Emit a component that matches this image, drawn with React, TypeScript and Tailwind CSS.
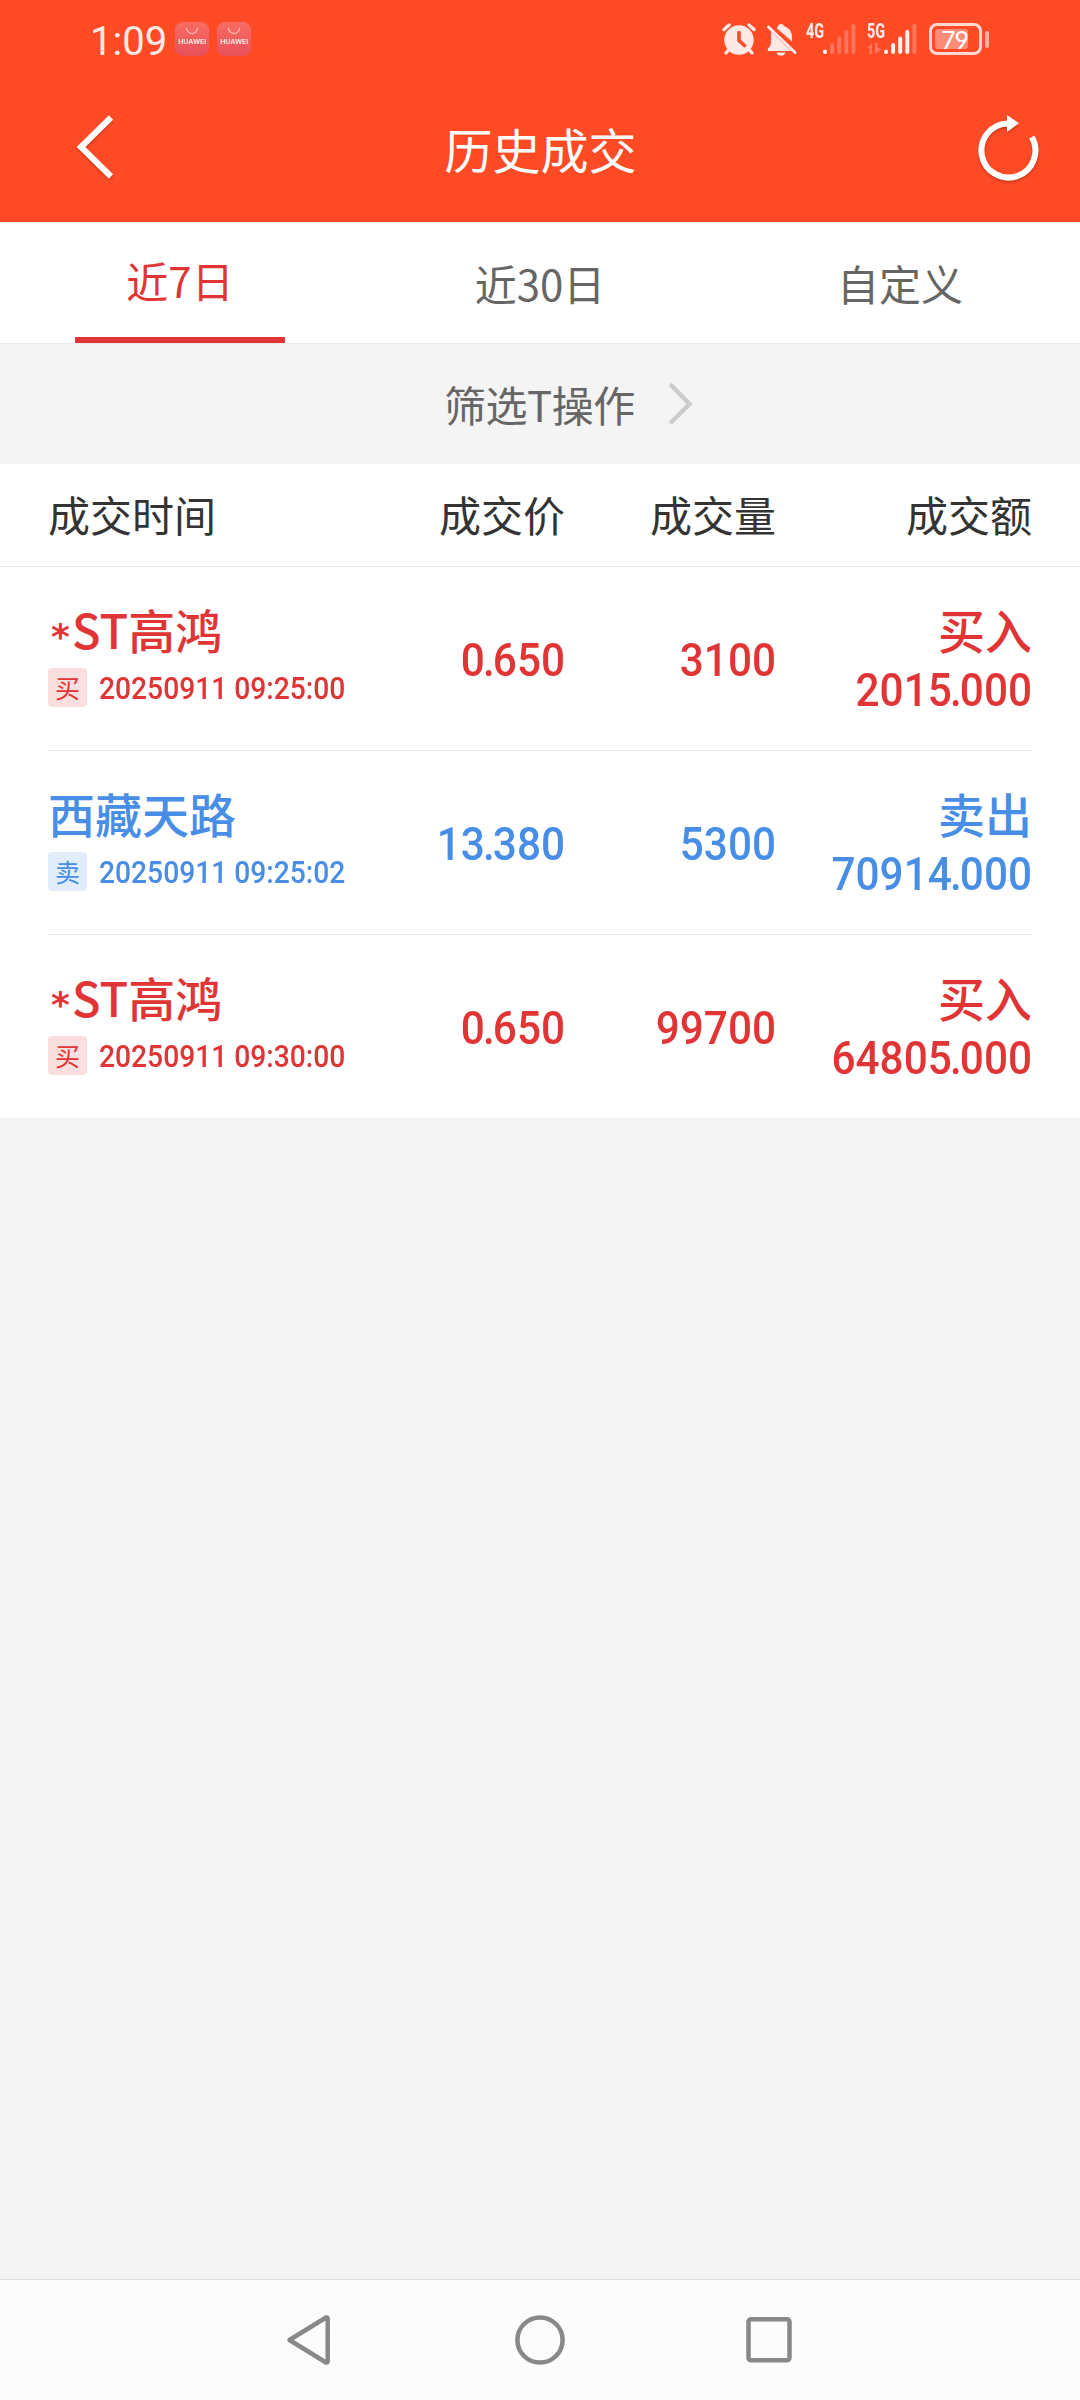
import React from "react";

type Trade = {
  name: string;
  starred?: boolean;
  side: "buy" | "sell";
  time: string;
  price: string;
  volume: string;
  amount: string;
};

const trades: Trade[] = [
  { name: "ST高鸿", starred: true, side: "buy", time: "20250911 09:25:00", price: "0.650", volume: "3100", amount: "2015.000" },
  { name: "西藏天路", side: "sell", time: "20250911 09:25:02", price: "13.380", volume: "5300", amount: "70914.000" },
  { name: "ST高鸿", starred: true, side: "buy", time: "20250911 09:30:00", price: "0.650", volume: "99700", amount: "64805.000" },
];

function HuaweiIcon() {
  return (
    <div className="flex h-[34px] w-[34px] flex-col items-center rounded-[8px] bg-gradient-to-b from-[#fa6c62] to-[#e8505a]">
      <svg className="mt-[5px] h-[8px] w-[14px]" viewBox="0 0 14 8" fill="none" stroke="#ffc4bd" strokeWidth="1.2">
        <path d="M1.5 1a5.5 5.5 0 0 0 11 0" />
      </svg>
      <span className="mt-[3px] scale-x-[1.15] font-['Inter'] text-[6px] leading-[7px] font-bold text-[#ffe9e6]">HUAWEI</span>
    </div>
  );
}

function AlarmIcon() {
  return (
    <svg className="h-[34px] w-[34px]" viewBox="0 0 34 34" fill="none">
      <circle cx="17" cy="18" r="14.7" fill="#ffe9e5" />
      <path d="M6.500 28 4 31M27.500 28 30 31" stroke="#ffe9e5" strokeWidth="3.400" strokeLinecap="round" />
      <path d="M2 7.500 7 3M32 7.500 27 3" stroke="#ffe9e5" strokeWidth="3.400" strokeLinecap="round" />
      <path d="M17 10.500V18.500L22.500 23.500" stroke="#ff4a26" strokeWidth="3.600" strokeLinecap="round" strokeLinejoin="round" />
    </svg>
  );
}

function MutedBellIcon() {
  return (
    <svg className="h-[34px] w-[32px]" viewBox="0 0 32 34" fill="none">
      <path d="M15 2c1.800 0 3 1 3.300 2.300C23.500 6 26 10 26 15v4.500L10.500 6c.8-.8 1.500-1.200 1.500-1.700C12.200 3 13.200 2 15 2Z" fill="#ffe9e5" />
      <path d="M5 9.500 25 29H2c-.8-2 .5-3 1.800-4.500C5 23 5 21 5 15.500Z" fill="#ffe9e5" />
      <path d="M10.500 30.500h9c-.6 2-2.200 3.300-4.500 3.300s-3.900-1.300-4.500-3.300Z" fill="#ffe9e5" />
      <path d="M2.500 5 29 30.500" stroke="#ffe9e5" strokeWidth="3" strokeLinecap="round" />
    </svg>
  );
}

function Signal({ label, level, data }: { label: string; level: number; data?: boolean }) {
  return (
    <div className="relative h-[32px] w-[50px]">
      <span className="absolute top-[1px] left-0 origin-left scale-x-[0.72] font-['Roboto'] text-[20px] leading-[14px] font-extrabold text-[#ffe9e5]">{label}</span>
      <svg className="h-[32px] w-[50px]" viewBox="0 0 50 32" strokeWidth="4" strokeLinecap="round" stroke="#fff1ee">
        {[28.500, 22, 15.500, 9, 4].map((y, i) => (
          <path key={y} d={`M${19 + i * 7.1} 29V${y - (i === 4 ? 1 : 0)}`} opacity={i < level ? 1 : 0.26} />
        ))}
        {data && (
          <path d="M0 25 5 20V31H2.500V25ZM8 20h2.500v5l4.500 1-7 5Z" fill="#fff" stroke="none" opacity="0.25" />
        )}
      </svg>
    </div>
  );
}

function Battery() {
  return (
    <div className="flex items-center">
      <div className="h-[32px] w-[53px] rounded-[8px] border-[3px] border-[#ffd9d2] p-[3px]">
        <div className="flex h-[20px] w-[33px] items-center justify-end rounded-[3px] bg-[#ff8c76] font-['Lato'] text-[25px] leading-none tracking-[-1px] text-white">79</div>
      </div>
      <div className="ml-[3px] h-[17px] w-[4px] rounded-[2px] bg-[#ffb5a6]" />
    </div>
  );
}

/** A right-aligned figure in condensed digits with a tightly set decimal point. */
function Figure({ value }: { value: string }) {
  const [whole, fraction] = value.split(".");
  return (
    <div className="origin-right scale-x-[0.92] text-right font-['Roboto'] text-[46px] leading-[54px] font-medium">
      {whole}
      {fraction && <span className="-mx-[2px]">.</span>}
      {fraction}
    </div>
  );
}

function TradeRow({ t, last }: { t: Trade; last: boolean }) {
  const buy = t.side === "buy";
  return (
    <div
      className={`mx-[48px] flex ${last ? "h-[183px]" : "h-[184px] border-b border-[#ebebeb]"} ${buy ? "text-[#e13434]" : "text-[#488ee6]"}`}
    >
      <div className="w-[317px] pt-[35px]">
        <div className="flex h-[54px] items-baseline text-[47px] leading-[54px] font-medium whitespace-nowrap">
          {t.starred && <span className="mr-[2px] ml-[3px] w-[19px] font-['DejaVu_Sans'] text-[36px] font-bold">*</span>}
          {t.name}
        </div>
        <div className="mt-[11px] flex items-center">
          <span
            className={`flex h-[39px] w-[39px] shrink-0 items-center justify-center rounded-[4px] text-[25px] leading-[37px] ${buy ? "bg-[#fbdfdf]" : "bg-[#e1edfb]"}`}
          >
            {buy ? "买" : "卖"}
          </span>
          <span className="ml-[12px] origin-left scale-x-[0.91] pt-[4px] font-['Roboto'] text-[31px] leading-[36px] font-medium whitespace-nowrap">
            {t.time}
          </span>
        </div>
      </div>
      <div className="w-[200px] pt-[66px]"><Figure value={t.price} /></div>
      <div className="w-[211px] pt-[66px]"><Figure value={t.volume} /></div>
      <div className="flex-1 pt-[35px]">
        <div className="text-right text-[47px] leading-[54px] font-medium">{buy ? "买入" : "卖出"}</div>
        <div className="mt-[7px]"><Figure value={t.amount} /></div>
      </div>
    </div>
  );
}

export default function App() {
  return (
    <div className="flex h-[2400px] w-[1080px] flex-col overflow-hidden bg-[#f4f4f4] font-['Noto_Sans_CJK_SC',sans-serif]">
      <header className="h-[222px] bg-[#ff4a26]">
        <div className="flex h-[78px] items-center pl-[90px]">
          <span className="w-[85px] pt-[5px] font-['Roboto'] text-[40px] leading-[40px] text-[#ffe9e5]">1:09</span>
          <div className="flex gap-[8px]">
            <HuaweiIcon />
            <HuaweiIcon />
          </div>
          <div className="ml-[471px] flex items-center">
            <AlarmIcon />
            <div className="ml-[10px]"><MutedBellIcon /></div>
            <div className="ml-[8px]"><Signal label="4G" level={1} /></div>
            <div className="ml-[11px]"><Signal label="5G" level={4} data /></div>
            <div className="ml-[12px]"><Battery /></div>
          </div>
        </div>
        <div className="flex h-[144px] items-start justify-between pt-[32px] pr-[39px] pl-[72px]">
          <svg className="h-[74px] w-[48px] drop-shadow-[0_2px_1px_rgba(0,0,0,0.2)]" viewBox="72 110 48 74" fill="none" stroke="#fff" strokeWidth="6">
            <path d="M111 117.500 81 147 111 176.500" />
          </svg>
          <h1 className="-ml-[14px] pt-[2px] text-[48px] leading-[72px] text-white">历史成交</h1>
          <svg className="h-[74px] w-[66px] drop-shadow-[0_2px_1px_rgba(0,0,0,0.2)]" viewBox="976 110 66 74" fill="none">
            <path d="M1009 123.500A27 27 0 1 0 1032.800 137" stroke="#fff" strokeWidth="6" />
            <path d="M1008 115 1020 123.300 1008 132Z" fill="#fff" />
          </svg>
        </div>
      </header>

      <nav className="flex h-[122px] border-b border-[#ebebeb] bg-white text-[42px] leading-[60px] text-[#666]">
        <div className="flex w-[360px] justify-center">
          <div className="h-[121px] w-[210px] border-b-[6px] border-[#e13434] pt-[28px] text-center text-[#e13434]">近7日</div>
        </div>
        <div className="w-[360px] pt-[31px] text-center">近30日</div>
        <div className="w-[360px] pt-[31px] text-center">自定义</div>
      </nav>

      <div className="flex h-[120px] items-center pl-[444px] text-[42px] leading-[60px] text-[#666]">
        <span className="tracking-[-0.500px]">筛选T操作</span>
        <svg className="ml-[33px] h-[44px] w-[26px]" viewBox="668 382 26 44" fill="none" stroke="#ccc" strokeWidth="4.500" strokeLinecap="round">
          <path d="M671.500 385.500 689.500 404 671.500 422" />
        </svg>
      </div>

      <main className="bg-white">
        <div className="flex h-[103px] border-b border-[#ebebeb] px-[48px] pt-[20px] text-[42px] leading-[60px] text-[#333]">
          <div className="w-[317px]">成交时间</div>
          <div className="w-[200px] text-right">成交价</div>
          <div className="w-[211px] text-right">成交量</div>
          <div className="flex-1 text-right">成交额</div>
        </div>
        {trades.map((t, i) => (
          <TradeRow key={t.time} t={t} last={i === trades.length - 1} />
        ))}
      </main>

      <footer className="mt-auto flex h-[121px] items-center border-t border-[#dcdcdc] bg-[#fcfcfc] pl-[284px]">
        <svg className="h-[54px] w-[50px]" viewBox="284 2313 50 54" fill="none" stroke="#888" strokeWidth="4.500" strokeLinejoin="round">
          <path d="M289.500 2340 326 2317.500Q327.700 2317 327.700 2319V2361Q327.700 2363 326 2362.500Z" />
        </svg>
        <svg className="ml-[179px] h-[54px] w-[54px]" viewBox="513 2313 54 54" fill="none" stroke="#888" strokeWidth="4.500">
          <circle cx="540" cy="2340" r="22.600" />
        </svg>
        <svg className="ml-[177px] h-[54px] w-[50px]" viewBox="744 2313 50 54" fill="none" stroke="#888" strokeWidth="4.500">
          <rect x="748.500" y="2319.300" width="41" height="41" rx="2.500" />
        </svg>
      </footer>
    </div>
  );
}
